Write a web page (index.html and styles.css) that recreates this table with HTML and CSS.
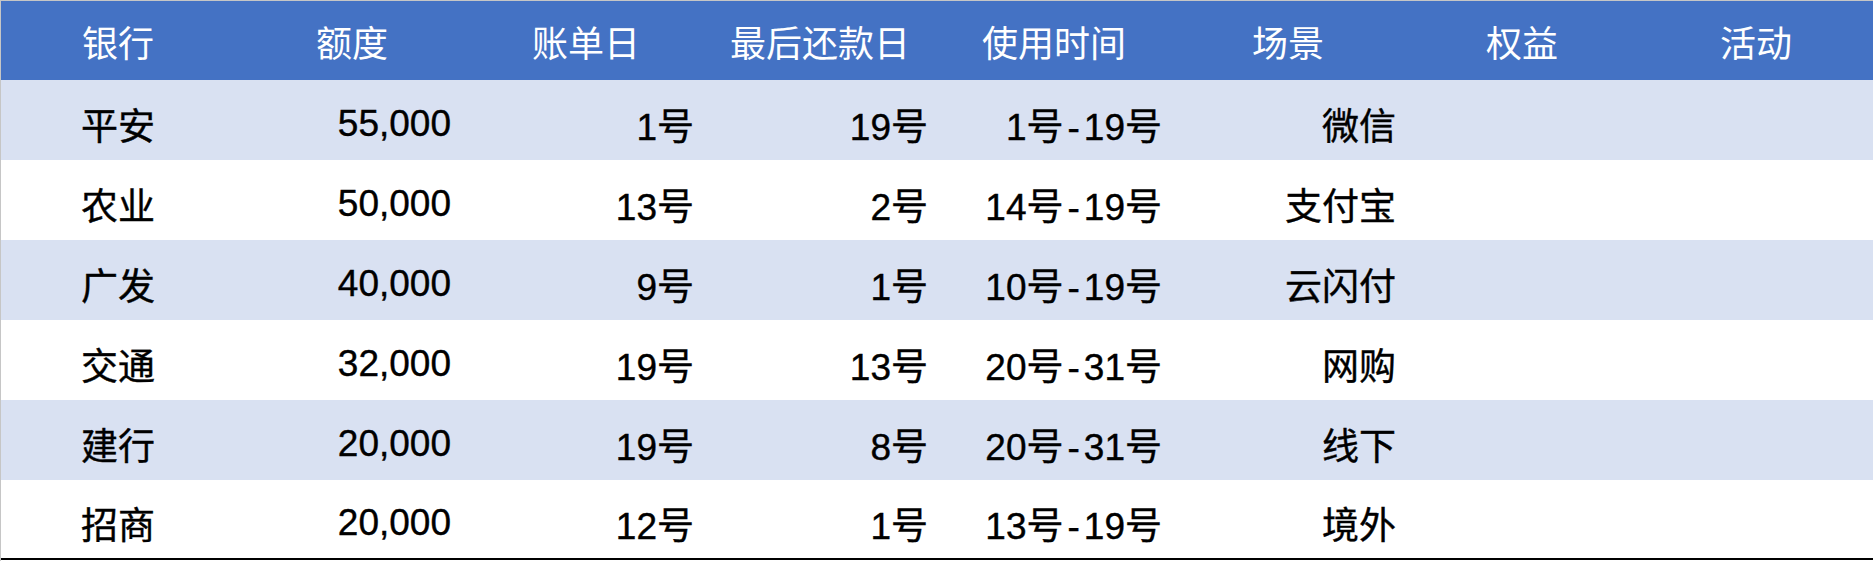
FILE: index.html
```html
<!DOCTYPE html>
<html lang="zh-CN">
<head>
<meta charset="utf-8">
<title>信用卡</title>
<link rel="stylesheet" href="styles.css">
</head>
<body>
<div class="sheet">
<table class="cards">
  <colgroup>
    <col class="c"><col class="c"><col class="c"><col class="c"><col class="c"><col class="c"><col class="c"><col class="c">
  </colgroup>
  <thead>
    <tr>
      <th>银行</th><th>额度</th><th>账单日</th><th>最后还款日</th><th>使用时间</th><th>场景</th><th>权益</th><th>活动</th>
    </tr>
  </thead>
  <tbody>
    <tr class="band">
      <td class="bank">平安</td><td class="amt">55,000</td><td class="num">1号</td><td class="num">19号</td><td class="num">1号<span class="dash">-</span>19号</td><td class="num">微信</td><td></td><td></td>
    </tr>
    <tr>
      <td class="bank">农业</td><td class="amt">50,000</td><td class="num">13号</td><td class="num">2号</td><td class="num">14号<span class="dash">-</span>19号</td><td class="num">支付宝</td><td></td><td></td>
    </tr>
    <tr class="band">
      <td class="bank">广发</td><td class="amt">40,000</td><td class="num">9号</td><td class="num">1号</td><td class="num">10号<span class="dash">-</span>19号</td><td class="num">云闪付</td><td></td><td></td>
    </tr>
    <tr>
      <td class="bank">交通</td><td class="amt">32,000</td><td class="num">19号</td><td class="num">13号</td><td class="num">20号<span class="dash">-</span>31号</td><td class="num">网购</td><td></td><td></td>
    </tr>
    <tr class="band">
      <td class="bank">建行</td><td class="amt">20,000</td><td class="num">19号</td><td class="num">8号</td><td class="num">20号<span class="dash">-</span>31号</td><td class="num">线下</td><td></td><td></td>
    </tr>
    <tr class="last">
      <td class="bank">招商</td><td class="amt">20,000</td><td class="num">12号</td><td class="num">1号</td><td class="num">13号<span class="dash">-</span>19号</td><td class="num">境外</td><td></td><td></td>
    </tr>
  </tbody>
</table>
</div>
</body>
</html>
```
FILE: styles.css
```css
html, body {
  margin: 0;
  padding: 0;
  background: #ffffff;
  overflow: hidden;
}

.sheet {
  width: 1873px;
  height: 561px;
  box-sizing: border-box;
  border-top: 1px solid #c6c6c6;
  border-left: 1px solid #c6c6c6;
}

.cards {
  width: 1872px;
  border-collapse: collapse;
  border-spacing: 0;
  table-layout: fixed;
  font-family: "Liberation Sans", "Noto Sans CJK SC", sans-serif;
  font-size: 36px;
  color: #000000;
}

.cards .c {
  width: 234px;
}

.cards th {
  height: 79px;
  padding: 0;
  background: #4472c4;
  color: #ffffff;
  font-weight: normal;
  text-align: center;
  vertical-align: middle;
}

.cards td {
  height: 80px;
  padding: 7px 9px 0 0;
  font-size: 37px;
  vertical-align: middle;
  white-space: nowrap;
  box-sizing: border-box;
  -webkit-text-stroke: 0.4px #000000;
}

.cards tr.band td {
  background: #d9e1f2;
}

.cards td.bank {
  text-align: center;
  padding-right: 0;
}

.cards td.amt {
  text-align: right;
  padding-right: 18px;
}

.cards td.num {
  text-align: right;
}

.cards .dash {
  margin: 0 4px;
}

.cards tr.last td {
  height: 79px;
  border-bottom: 2px solid #000000;
}
```
